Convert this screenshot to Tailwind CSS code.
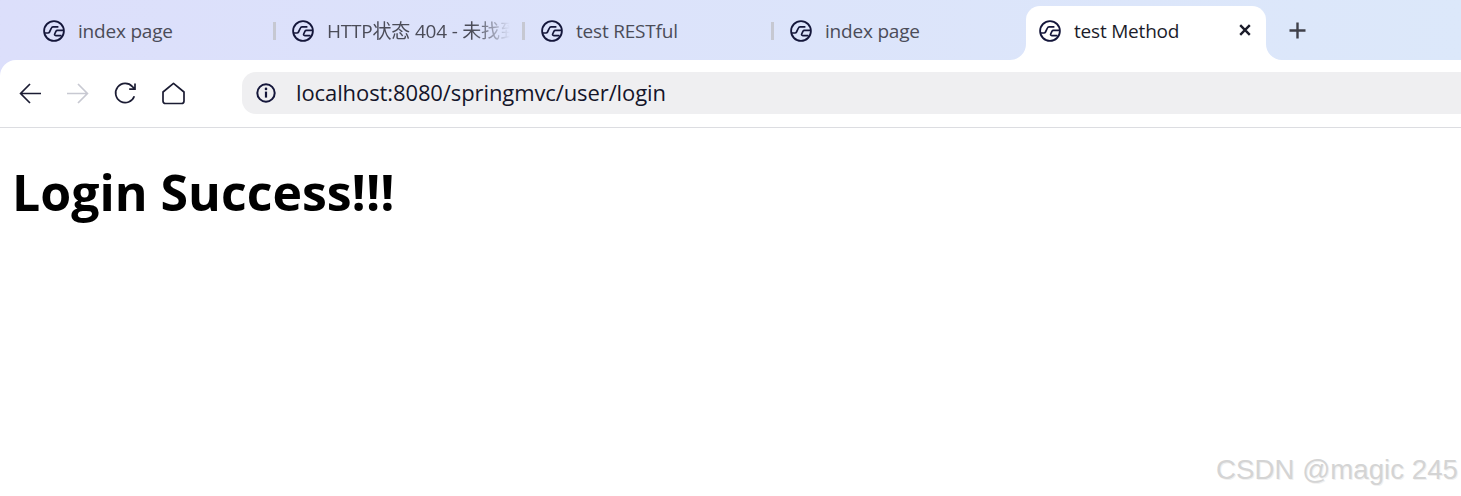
<!DOCTYPE html>
<html lang="zh">
<head>
<meta charset="utf-8">
<title>test Method</title>
<script src="https://cdn.jsdelivr.net/npm/@tailwindcss/browser@4"></script>
</head>
<body class="bg-white overflow-hidden">
<svg width="0" height="0" class="absolute">
  <defs>
    <symbol id="fav" viewBox="0 0 22 22">
      <circle cx="11" cy="11" r="9.9" fill="none" stroke="#14163a" stroke-width="1.8"/>
      <path d="M1.5 13 H5 C5.8 13 6.2 12.6 6.5 12 L8.4 8 C8.7 7.3 9.2 6.9 10 6.9 H15.4" fill="none" stroke="#14163a" stroke-width="1.7"/>
      <path d="M20.5 10.4 H14.4 C13.6 10.4 13.2 10.8 12.9 11.4 L11.7 14 C11.3 14.9 11.8 15.6 12.8 15.6 H18.4" fill="none" stroke="#14163a" stroke-width="1.7"/>
    </symbol>
  </defs>
</svg>
<div class="relative w-[1461px] h-[496px] overflow-hidden font-['Open_Sans','Noto_Sans_CJK_SC',sans-serif]">
  <div class="flex h-[60px] pt-[6px] pl-[25px] bg-gradient-to-r from-[#dcdffb] to-[#dce8fa]">
    <div class="relative flex items-center w-[249px] h-[54px] pl-[18px] shrink-0 text-[#4b4c58]">
      <svg class="w-[22px] h-[22px] shrink-0 -mt-[4px]"><use href="#fav"/></svg>
      <span class="ml-[13px] -mt-[3px] text-[19px] tracking-[-0.2px] whitespace-nowrap">index page</span>
      <span class="absolute -right-[2px] top-[16px] w-[3px] h-[18px] bg-[#c6c8d2]"></span>
    </div>
    <div class="relative flex items-center w-[249px] h-[54px] pl-[18px] shrink-0 text-[#4b4c58]">
      <svg class="w-[22px] h-[22px] shrink-0 -mt-[4px]"><use href="#fav"/></svg>
      <span class="ml-[13px] -mt-[3px] w-[183px] overflow-hidden text-[19px] tracking-[-0.2px] whitespace-nowrap [mask-image:linear-gradient(to_right,black_80%,transparent_100%)]">HTTP状态 404 - 未找到</span>
      <span class="absolute -right-[2px] top-[16px] w-[3px] h-[18px] bg-[#c6c8d2]"></span>
    </div>
    <div class="relative flex items-center w-[249px] h-[54px] pl-[18px] shrink-0 text-[#4b4c58]">
      <svg class="w-[22px] h-[22px] shrink-0 -mt-[4px]"><use href="#fav"/></svg>
      <span class="ml-[13px] -mt-[3px] text-[19px] tracking-[-0.2px] whitespace-nowrap">test RESTful</span>
      <span class="absolute -right-[2px] top-[16px] w-[3px] h-[18px] bg-[#c6c8d2]"></span>
    </div>
    <div class="relative flex items-center w-[254px] h-[54px] pl-[18px] shrink-0 text-[#4b4c58]">
      <svg class="w-[22px] h-[22px] shrink-0 -mt-[4px]"><use href="#fav"/></svg>
      <span class="ml-[13px] -mt-[3px] text-[19px] tracking-[-0.2px] whitespace-nowrap">index page</span>
    </div>
    <div class="relative flex items-center w-[240px] h-[54px] pl-[13px] shrink-0 bg-white rounded-t-[14px] text-[#1b1c2a]">
      <svg class="absolute -left-[16px] bottom-0 w-[16px] h-[16px]" viewBox="0 0 16 16"><path d="M16 0 A16 16 0 0 1 0 16 H16 Z" fill="#ffffff"/></svg>
      <svg class="absolute -right-[16px] bottom-0 w-[16px] h-[16px]" viewBox="0 0 16 16"><path d="M0 0 A16 16 0 0 0 16 16 H0 Z" fill="#ffffff"/></svg>
      <svg class="w-[22px] h-[22px] shrink-0 -mt-[4px]"><use href="#fav"/></svg>
      <span class="ml-[13px] -mt-[3px] text-[19px] tracking-[-0.2px] whitespace-nowrap">test Method</span>
      <svg class="absolute right-[15px] top-[18px] w-[12px] h-[12px]" viewBox="0 0 12 12"><path d="M1.2 1.2 L10.8 10.8 M10.8 1.2 L1.2 10.8" stroke="#1b1c2a" stroke-width="2.4" fill="none"/></svg>
    </div>
    <div class="flex items-center justify-center w-[62px] h-[48px]">
      <svg class="w-[17px] h-[17px]" viewBox="0 0 17 17"><path d="M8.5 0.5 V16.5 M0.5 8.5 H16.5" stroke="#3f4049" stroke-width="2.4" fill="none"/></svg>
    </div>
  </div>
  <div class="relative flex items-center h-[68px] pl-[19px] bg-[linear-gradient(to_right,#dcdffb,#dce8fa)] border-b border-[#dcdde1]">
    <div class="absolute inset-0 bg-white rounded-tl-[16px]"></div>
    <div class="relative flex items-center w-full h-full">
      <svg class="w-[23px] h-[23px] shrink-0" viewBox="0 0 23 23"><path d="M22 11.5 H2 M11 2 L1.6 11.5 L11 21" fill="none" stroke="#1b1c33" stroke-width="1.7"/></svg>
      <svg class="ml-[24px] w-[23px] h-[23px] shrink-0" viewBox="0 0 23 23"><path d="M1 11.5 H21 M12 2 L21.4 11.5 L12 21" fill="none" stroke="#c8c9d2" stroke-width="1.7"/></svg>
      <svg class="ml-[25px] w-[23px] h-[23px] shrink-0" viewBox="0 0 23 23"><path d="M20.3 14.2 A9.6 9.6 0 1 1 18.4 4.6 L21 7.2 M21 1.4 V7.2 H15.2" fill="none" stroke="#1b1c33" stroke-width="1.7"/></svg>
      <svg class="ml-[25px] w-[23px] h-[23px] shrink-0" viewBox="0 0 23 23"><path d="M11.5 1.4 L22 10 V19 C22 20.6 21 21.5 19.5 21.5 H3.5 C2 21.5 1 20.6 1 19 V10 Z" fill="none" stroke="#1b1c33" stroke-width="1.7" stroke-linejoin="round"/></svg>
      <div class="ml-[57px] -mt-[2px] flex items-center flex-1 h-[42px] pl-[14px] rounded-l-[14px] bg-[#efeff1]">
        <svg class="w-[20px] h-[20px] shrink-0" viewBox="0 0 20 20"><circle cx="10" cy="10" r="8.7" fill="none" stroke="#14163a" stroke-width="2"/><path d="M10 8.6 V14.6" stroke="#14163a" stroke-width="2.2" fill="none"/><circle cx="10" cy="5.9" r="1.3" fill="#14163a"/></svg>
        <span class="ml-[20px] text-[22px] tracking-[-0.1px] text-[#14152a] whitespace-nowrap">localhost:8080/springmvc/user/login</span>
      </div>
    </div>
  </div>
  <h1 class="pl-[12px] pt-[31px] text-[50px] leading-[66px] font-bold text-black">Login Success!!!</h1>
  <div class="absolute right-[3px] bottom-[11px] text-[27.7px] leading-[30px] font-['Liberation_Sans',sans-serif] text-[#d4d4d4] [text-shadow:1px_1px_0_#f0f0f0] whitespace-nowrap">CSDN @magic 245</div>
</div>
</body>
</html>
